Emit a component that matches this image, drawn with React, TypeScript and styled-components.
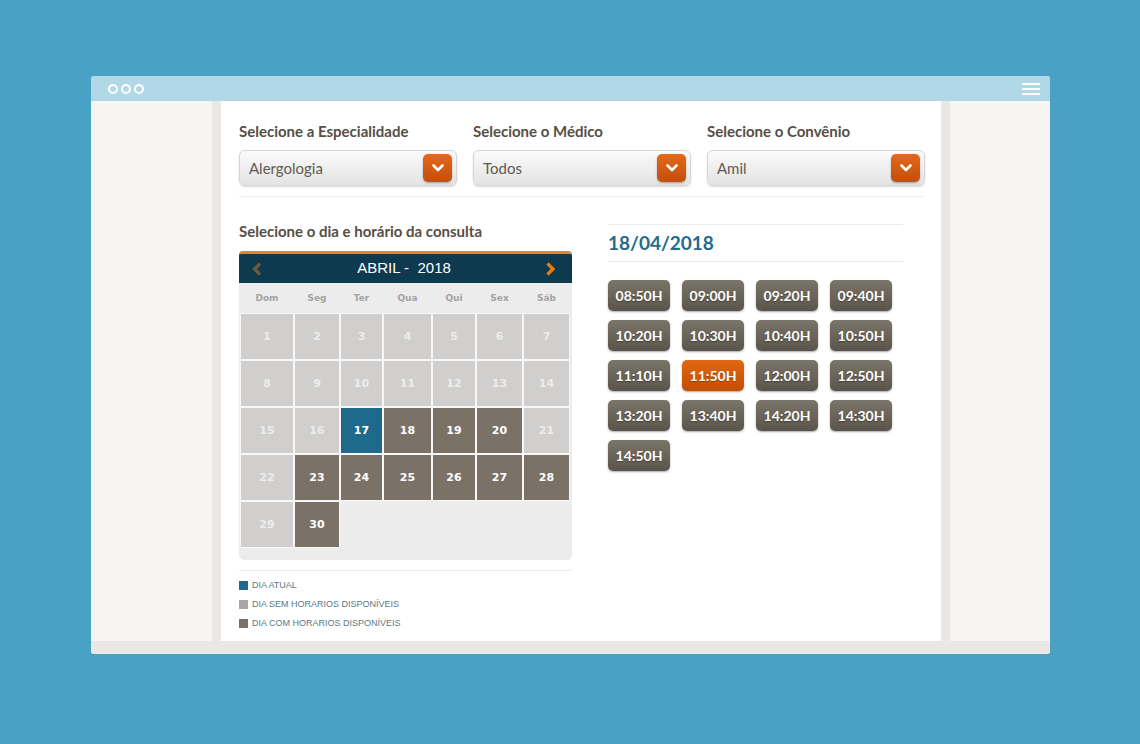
import styled, { createGlobalStyle } from 'styled-components';

const GlobalStyle = createGlobalStyle`
  html, body {
    margin: 0;
    padding: 0;
    background: #49a1c6;
  }
  body {
    font-family: Lato, "Open Sans", "Noto Sans", sans-serif;
  }
`;

const weekDays = ['Dom', 'Seg', 'Ter', 'Qua', 'Qui', 'Sex', 'Sáb'];

type DayKind = 'off' | 'on' | 'today';

const days: { n: number; kind: DayKind }[] = Array.from({ length: 30 }, (_, i) => {
  const n = i + 1;
  if (n === 17) return { n, kind: 'today' };
  if (n < 17) return { n, kind: 'off' };
  if (n === 21 || n === 22 || n === 29) return { n, kind: 'off' };
  return { n, kind: 'on' };
});

const times = [
  '08:50H', '09:00H', '09:20H', '09:40H',
  '10:20H', '10:30H', '10:40H', '10:50H',
  '11:10H', '11:50H', '12:00H', '12:50H',
  '13:20H', '13:40H', '14:20H', '14:30H',
  '14:50H',
];

const selects = [
  { label: 'Selecione a Especialidade', value: 'Alergologia' },
  { label: 'Selecione o Médico', value: 'Todos' },
  { label: 'Selecione o Convênio', value: 'Amil' },
];

const Chevron = ({ dir, color }: { dir: 'left' | 'right' | 'down'; color: string }) => {
  if (dir === 'down') {
    return (
      <svg width="12" height="8" viewBox="0 0 12 8">
        <polyline points="1.5,1.5 6,6 10.5,1.5" fill="none" stroke={color} strokeWidth="2.6" strokeLinecap="round" strokeLinejoin="round" />
      </svg>
    );
  }
  const pts = dir === 'left' ? '8,1.5 2.5,7 8,12.5' : '2.5,1.5 8,7 2.5,12.5';
  return (
    <svg width="11" height="14" viewBox="0 0 11 14">
      <polyline points={pts} fill="none" stroke={color} strokeWidth="3.2" strokeLinejoin="miter" />
    </svg>
  );
};

const App = () => {
  return (
    <>
      <GlobalStyle />
      <Stage>
        <Window>
          <TitleBar>
            <Dots>
              <Dot />
              <Dot />
              <Dot />
            </Dots>
            <Burger>
              <span />
              <span />
              <span />
            </Burger>
          </TitleBar>

          <Body>
            <Side $w={121} />
            <Gutter />
            <Main>
              <SelectRow>
                {selects.map(s => (
                  <Field key={s.label}>
                    <Heading>{s.label}</Heading>
                    <SelectBox>
                      <span>{s.value}</span>
                      <DropButton>
                        <Chevron dir="down" color="#fff" />
                      </DropButton>
                    </SelectBox>
                  </Field>
                ))}
              </SelectRow>

              <Schedule>
                <div>
                  <Heading className="cal">Selecione o dia e horário da consulta</Heading>
                  <Calendar>
                    <CalHeader>
                      <Chevron dir="left" color="#6e5a3c" />
                      <span>ABRIL - &nbsp;2018</span>
                      <Chevron dir="right" color="#ec7a12" />
                    </CalHeader>
                    <CalBody>
                      <DayGrid>
                        {weekDays.map(d => (
                          <WeekDay key={d}>{d}</WeekDay>
                        ))}
                      </DayGrid>
                      <DayGrid className="cells">
                        {days.map(d => (
                          <DayCell key={d.n} $kind={d.kind}>{d.n}</DayCell>
                        ))}
                      </DayGrid>
                    </CalBody>
                  </Calendar>

                  <Legend>
                    <LegendItem $color="#1f6a8c">DIA ATUAL</LegendItem>
                    <LegendItem $color="#a8a7a5">DIA SEM HORARIOS DISPONÍVEIS</LegendItem>
                    <LegendItem $color="#7a7266">DIA COM HORARIOS DISPONÍVEIS</LegendItem>
                  </Legend>
                </div>

                <Slots>
                  <DateTitle>18/04/2018</DateTitle>
                  <TimeGrid>
                    {times.map(t => (
                      <TimeButton key={t} $active={t === '11:50H'}>{t}</TimeButton>
                    ))}
                  </TimeGrid>
                </Slots>
              </Schedule>
            </Main>
            <Gutter />
            <Side $w={100} />
          </Body>
          <BottomBar />
        </Window>
      </Stage>
    </>
  );
};

const Stage = styled.div`
  width: 1140px;
  height: 744px;
  padding-top: 76px;
  box-sizing: border-box;
  display: flex;
  justify-content: flex-start;
`;

const Window = styled.div`
  margin-left: 91px;
  width: 959px;
  height: 578px;
  border-radius: 3px;
  overflow: hidden;
  display: flex;
  flex-direction: column;
  background: #f6f5f3;
`;

const TitleBar = styled.div`
  height: 25px;
  flex: none;
  background: #b0d8e6;
  display: flex;
  align-items: center;
  justify-content: space-between;
  padding: 0 10px 0 17px;
`;

const Dots = styled.div`
  display: flex;
  gap: 3px;
`;

const Dot = styled.span`
  width: 6px;
  height: 6px;
  border: 2px solid #fff;
  border-radius: 50%;
`;

const Burger = styled.div`
  display: flex;
  flex-direction: column;
  gap: 3px;

  span {
    width: 18px;
    height: 2px;
    background: #fff;
  }
`;

const Body = styled.div`
  flex: 1;
  display: flex;
`;

const Side = styled.div<{ $w: number }>`
  width: ${p => p.$w}px;
  flex: none;
  background: #f6f5f3;
`;

const Gutter = styled.div`
  width: 9px;
  flex: none;
  background: #e9e8e5;
`;

const BottomBar = styled.div`
  height: 13px;
  flex: none;
  background: #e9e8e5;
`;

const Main = styled.div`
  width: 720px;
  flex: none;
  background: #fff;
  box-sizing: border-box;
  padding: 21px 18px 0 18px;
`;

const SelectRow = styled.div`
  display: grid;
  grid-template-columns: repeat(3, 218px);
  column-gap: 16px;
  padding-bottom: 10px;
  border-bottom: 1px solid #ebebeb;
`;

const Field = styled.div`
  display: flex;
  flex-direction: column;
`;

const Heading = styled.div`
  font-family: Lato, "Open Sans", sans-serif;
  font-weight: 700;
  font-size: 15px;
  line-height: 18px;
  color: #574e44;
  margin-bottom: 10px;

  &.cal {
    margin-bottom: 11px;
  }
`;

const SelectBox = styled.div`
  height: 36px;
  box-sizing: border-box;
  border: 1px solid #d6d6d6;
  border-radius: 6px;
  background: linear-gradient(#fbfbfb, #e3e3e3);
  box-shadow: 0 1px 2px rgba(0, 0, 0, 0.15);
  display: flex;
  align-items: center;
  justify-content: space-between;
  padding: 0 4px 0 9px;

  span {
    font-size: 15px;
    font-weight: 400;
    color: #625950;
  }
`;

const DropButton = styled.div`
  width: 29px;
  height: 28px;
  border-radius: 5px;
  background: linear-gradient(#e5681a, #c24f0c);
  box-shadow: 0 1px 2px rgba(0, 0, 0, 0.3);
  display: flex;
  align-items: center;
  justify-content: center;
`;

const Schedule = styled.div`
  display: grid;
  grid-template-columns: 333px 295px;
  column-gap: 36px;
  padding-top: 25px;
`;

const Calendar = styled.div`
  width: 333px;
`;

const CalHeader = styled.div`
  height: 29px;
  border-top: 3px solid #e8832a;
  border-radius: 4px 4px 0 0;
  background: #0e3a4f;
  display: flex;
  align-items: center;
  justify-content: space-between;
  padding: 0 16px 0 13px;

  span {
    font-family: "Liberation Sans", Arial, sans-serif;
    font-size: 15px;
    color: #fff;
    margin-top: -2px;
  }
`;

const CalBody = styled.div`
  background: #ececec;
  border-radius: 0 0 5px 5px;
  padding: 0 2px 13px 2px;
`;

const DayGrid = styled.div`
  display: grid;
  grid-template-columns: 52px 44px 41px 47px 42px 45px 45px;
  column-gap: 2px;

  &.cells {
    grid-auto-rows: 45px;
    row-gap: 2px;
    padding-top: 2px;
  }
`;

const WeekDay = styled.div`
  height: 29px;
  display: flex;
  align-items: center;
  justify-content: center;
  font-family: "DejaVu Sans", Verdana, sans-serif;
  font-weight: 700;
  font-size: 9px;
  color: #a3a3a3;
`;

const dayColors: Record<DayKind, string> = {
  off: '#d0cfcd',
  on: '#7a7266',
  today: '#1f6a8c',
};

const DayCell = styled.div<{ $kind: DayKind }>`
  background: ${p => dayColors[p.$kind]};
  box-shadow: 0 0 0 1px #f7f7f7;
  display: flex;
  align-items: center;
  justify-content: center;
  font-family: "DejaVu Sans", Verdana, sans-serif;
  font-weight: 700;
  font-size: 11px;
  color: ${p => (p.$kind === 'off' ? '#ececec' : '#fff')};
`;

const Legend = styled.div`
  margin-top: 10px;
  border-top: 1px solid #ececec;
  padding-top: 9px;
  display: flex;
  flex-direction: column;
  gap: 8px;
`;

const LegendItem = styled.div<{ $color: string }>`
  display: flex;
  align-items: center;
  gap: 4px;
  font-family: "Liberation Sans", Arial, sans-serif;
  font-size: 9px;
  line-height: 11px;
  color: #5b7886;

  &::before {
    content: '';
    width: 9px;
    height: 9px;
    background: ${p => p.$color};
  }
`;

const Slots = styled.div`
  padding-top: 2px;
`;

const DateTitle = styled.div`
  border-top: 1px solid #ebebeb;
  border-bottom: 1px solid #ebebeb;
  height: 38px;
  box-sizing: border-box;
  padding-bottom: 2px;
  display: flex;
  align-items: center;
  font-family: Lato, "Open Sans", sans-serif;
  font-weight: 700;
  font-size: 19px;
  color: #236b8e;
`;

const TimeGrid = styled.div`
  margin-top: 18px;
  display: grid;
  grid-template-columns: repeat(4, 62px);
  column-gap: 12px;
  row-gap: 9px;
`;

const TimeButton = styled.div<{ $active?: boolean }>`
  height: 31px;
  border-radius: 5px;
  background: ${p =>
    p.$active
      ? 'linear-gradient(#e2670f, #c24e05)'
      : 'linear-gradient(#7b7468, #5b544a)'};
  box-shadow: 0 1px 2px rgba(0, 0, 0, 0.35);
  display: flex;
  align-items: center;
  justify-content: center;
  font-family: Lato, "Open Sans", sans-serif;
  font-weight: 700;
  font-size: 14px;
  color: #fff;
  text-shadow: 0 1px 1px rgba(0, 0, 0, 0.35);
`;

export default App;
